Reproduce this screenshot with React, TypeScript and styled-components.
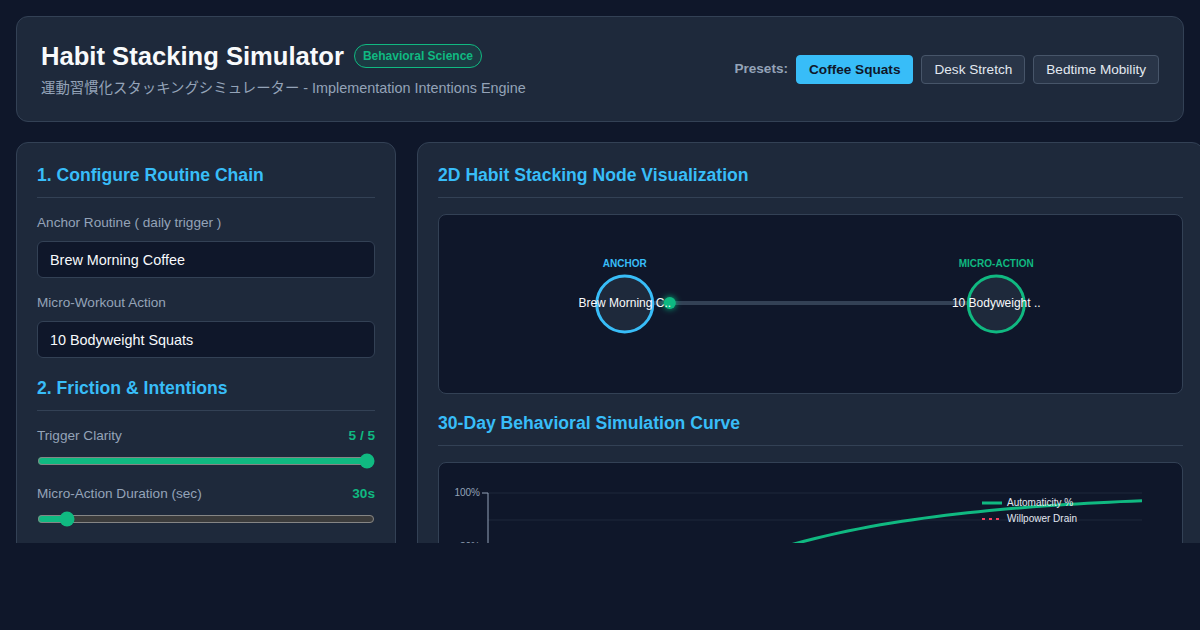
import { useState } from 'react';
import styled, { createGlobalStyle } from 'styled-components';

//
//Base page setup
const GlobalStyle = createGlobalStyle`
    *, *::before, *::after {
        box-sizing: border-box;
    }
    body {
        margin: 0;
        background: #0f172a;
        color: #f8fafc;
        font-family: "Liberation Sans", Arial, "Noto Sans CJK JP", sans-serif;
    }
`;

const Page = styled.div`
    padding: 16px;
`;

const Header = styled.header`
    display: flex;
    justify-content: space-between;
    align-items: center;
    padding: 24px;
    background: #1e293b;
    border: 1px solid #334155;
    border-radius: 12px;
`;

const TitleRow = styled.div`
    display: flex;
    align-items: center;
    gap: 10px;
`;

const Title = styled.h1`
    margin: 0;
    font-size: 25.6px;
    line-height: 30px;
    font-weight: 700;
    color: #f8fafc;
`;

const Badge = styled.span`
    font-size: 12px;
    line-height: 14px;
    font-weight: 700;
    color: #10b981;
    background: rgba(16, 185, 129, 0.12);
    border: 1px solid #10b981;
    border-radius: 999px;
    padding: 4px 8px;
`;

const Subtitle = styled.p`
    margin: 9px 0 0;
    font-size: 14.4px;
    line-height: 17px;
    color: #94a3b8;
`;

const Presets = styled.div`
    display: flex;
    align-items: center;
    gap: 8px;
`;

const PresetLabel = styled.span`
    font-size: 13.6px;
    font-weight: 700;
    color: #94a3b8;
    margin-bottom: 2px;
`;

const PresetButton = styled.button<{ $active?: boolean }>`
    font-family: inherit;
    font-size: 13.6px;
    line-height: 15px;
    padding: 6px 12px;
    border-radius: 4px;
    cursor: pointer;
    font-weight: ${(p) => (p.$active ? 700 : 400)};
    color: ${(p) => (p.$active ? '#0f172a' : '#e2e8f0')};
    background: ${(p) => (p.$active ? '#38bdf8' : '#293548')};
    border: 1px solid ${(p) => (p.$active ? '#38bdf8' : '#475569')};
`;

//
//Two column workspace, clipped at the bottom
const Main = styled.main`
    display: grid;
    grid-template-columns: 380px 787px;
    gap: 21px;
    align-items: start;
    margin-top: 20px;
    height: 401px;
    overflow-x: visible;
    overflow-y: clip;
`;

const Panel = styled.section`
    padding: 18px 20px 24px;
    background: #1e293b;
    border: 1px solid #334155;
    border-radius: 12px;
`;

const SectionTitle = styled.h2<{ $spaced?: boolean }>`
    margin: ${(p) => (p.$spaced ? '15px' : '0')} 0 16px;
    padding-bottom: 8px;
    border-bottom: 1px solid #334155;
    font-size: 17.6px;
    line-height: 28px;
    font-weight: 700;
    color: #38bdf8;
`;

const Field = styled.div`
    margin-bottom: 16px;
`;

const Label = styled.label`
    display: block;
    margin-bottom: 9px;
    font-size: 13.6px;
    line-height: 18px;
    color: #94a3b8;
`;

const TextInput = styled.input`
    display: block;
    width: 100%;
    height: 37px;
    padding: 0 12px;
    background: #0f172a;
    border: 1px solid #334155;
    border-radius: 6px;
    color: #f8fafc;
    font-family: inherit;
    font-size: 14.4px;
    outline: none;
`;

const SliderHead = styled.div`
    display: flex;
    justify-content: space-between;
    align-items: center;
    margin-bottom: 8px;
    font-size: 13.6px;
    line-height: 18px;
    color: #94a3b8;
`;

const SliderValue = styled.span`
    color: #10b981;
    font-weight: 700;
`;

const Range = styled.input`
    display: block;
    width: 100%;
    height: 16px;
    margin: 0;
    accent-color: #10b981;
    color-scheme: dark;
`;

const CanvasBox = styled.div<{ $h: number }>`
    height: ${(p) => p.$h}px;
    background: #0f172a;
    border: 1px solid #334155;
    border-radius: 8px;
    overflow: hidden;
`;

const Drawing = styled.svg`
    display: block;
    width: 100%;
    height: 100%;
`;

type Preset = { name: string; anchor: string; action: string; clarity: number; duration: number };

const PRESETS: Preset[] = [
    { name: 'Coffee Squats', anchor: 'Brew Morning Coffee', action: '10 Bodyweight Squats', clarity: 5, duration: 30 },
    { name: 'Desk Stretch', anchor: 'Sit Down at Desk', action: 'Neck & Shoulder Stretch', clarity: 4, duration: 60 },
    { name: 'Bedtime Mobility', anchor: 'Brush Teeth at Night', action: 'Hip Opener Flow', clarity: 3, duration: 120 },
];

const shorten = (s: string) => (s.length > 14 ? s.slice(0, 14) + '..' : s);

//
//Anchor -> micro-action link
const NodeGraph = ({ anchor, action }: { anchor: string; action: string }) => {
    const W = 743;
    const H = 178;
    const ax = W * 0.25;
    const bx = W * 0.75;
    const cy = H / 2;
    const r = 28;
    return (
        <Drawing viewBox={`0 0 ${W} ${H}`}>
            <defs>
                <filter id="pulse-glow" x="-100%" y="-100%" width="300%" height="300%">
                    <feGaussianBlur stdDeviation="3" result="b" />
                    <feMerge>
                        <feMergeNode in="b" />
                        <feMergeNode in="SourceGraphic" />
                    </feMerge>
                </filter>
            </defs>
            <line x1={ax + r} y1={cy - 1} x2={bx - r} y2={cy - 1} stroke="#334155" strokeWidth={4} />
            <text x={ax} y={cy - 40} textAnchor="middle" dominantBaseline="middle" fontSize={10} fontWeight={700} fill="#38bdf8">
                ANCHOR
            </text>
            <circle cx={ax} cy={cy} r={r} fill="#1e293b" stroke="#38bdf8" strokeWidth={3} />
            <text x={bx} y={cy - 40} textAnchor="middle" dominantBaseline="middle" fontSize={10} fontWeight={700} fill="#10b981">
                MICRO-ACTION
            </text>
            <circle cx={bx} cy={cy} r={r} fill="#1e293b" stroke="#10b981" strokeWidth={3} />
            <circle cx={ax + 45} cy={cy - 1} r={6} fill="#10b981" filter="url(#pulse-glow)" />
            <text x={ax} y={cy} textAnchor="middle" dominantBaseline="middle" fontSize={12} fill="#f8fafc">
                {shorten(anchor)}
            </text>
            <text x={bx} y={cy} textAnchor="middle" dominantBaseline="middle" fontSize={12} fill="#f8fafc">
                {shorten(action)}
            </text>
        </Drawing>
    );
};

//
//30 day automaticity vs willpower curve
const SimulationChart = ({ clarity, duration }: { clarity: number; duration: number }) => {
    const W = 743;
    const H = 328;
    const left = 49;
    const right = 703;
    const top = 30;
    const unit = 2.7;
    const k = 0.025 * clarity * (1 - duration / 600);
    const px = (t: number) => left + (t / 30) * (right - left);
    const py = (v: number) => top + (100 - v) * unit;

    const days = Array.from({ length: 61 }, (_, i) => i / 2);
    const auto = days.map((t) => `${px(t)},${py(100 * (1 - Math.exp(-k * t)))}`).join(' ');
    const drain = days
        .map((t) => `${px(t)},${py((20 + duration / 6) * Math.exp(-k * 0.9 * t) + 4)}`)
        .join(' ');

    return (
        <Drawing viewBox={`0 0 ${W} ${H}`}>
            {Array.from({ length: 11 }, (_, i) => i * 10).map((v) => (
                <line key={v} x1={left} x2={right} y1={py(v)} y2={py(v)} stroke="#1e293b" strokeWidth={1} />
            ))}
            {[0, 20, 40, 60, 80, 100].map((v) => (
                <g key={v}>
                    <line x1={left - 6} x2={left} y1={py(v)} y2={py(v)} stroke="#94a3b8" />
                    <text x={left - 8} y={py(v)} textAnchor="end" dominantBaseline="middle" fontSize={10} fill="#94a3b8">
                        {v}%
                    </text>
                </g>
            ))}
            <line x1={left} x2={left} y1={top} y2={py(0)} stroke="#94a3b8" />
            <line x1={left} x2={right} y1={py(0)} y2={py(0)} stroke="#94a3b8" />
            {[1, 5, 10, 15, 20, 25, 30].map((d) => (
                <text key={d} x={px(d)} y={py(0) + 16} textAnchor="middle" fontSize={10} fill="#94a3b8">
                    Day {d}
                </text>
            ))}
            <polyline points={drain} fill="none" stroke="#f43f5e" strokeWidth={2} strokeDasharray="3 4" />
            <polyline points={auto} fill="none" stroke="#10b981" strokeWidth={3} />
            <line x1={543} x2={563} y1={40} y2={40} stroke="#10b981" strokeWidth={3} />
            <text x={568} y={40} dominantBaseline="middle" fontSize={10} fill="#e2e8f0">
                Automaticity %
            </text>
            <line x1={543} x2={563} y1={56} y2={56} stroke="#f43f5e" strokeWidth={2} strokeDasharray="3 4" />
            <text x={568} y={56} dominantBaseline="middle" fontSize={10} fill="#e2e8f0">
                Willpower Drain
            </text>
        </Drawing>
    );
};

const App = () => {
    const [preset, setPreset] = useState('Coffee Squats');
    const [anchor, setAnchor] = useState('Brew Morning Coffee');
    const [action, setAction] = useState('10 Bodyweight Squats');
    const [clarity, setClarity] = useState(5);
    const [duration, setDuration] = useState(30);

    const applyPreset = (p: Preset) => {
        setPreset(p.name);
        setAnchor(p.anchor);
        setAction(p.action);
        setClarity(p.clarity);
        setDuration(p.duration);
    };

    return (
        <Page>
            <GlobalStyle />
            <Header>
                <div>
                    <TitleRow>
                        <Title>Habit Stacking Simulator</Title>
                        <Badge>Behavioral Science</Badge>
                    </TitleRow>
                    <Subtitle>運動習慣化スタッキングシミュレーター - Implementation Intentions Engine</Subtitle>
                </div>
                <Presets>
                    <PresetLabel>Presets:</PresetLabel>
                    {PRESETS.map((p) => (
                        <PresetButton key={p.name} $active={preset === p.name} onClick={() => applyPreset(p)}>
                            {p.name}
                        </PresetButton>
                    ))}
                </Presets>
            </Header>

            <Main>
                <Panel>
                    <SectionTitle>1. Configure Routine Chain</SectionTitle>
                    <Field>
                        <Label>Anchor Routine ( daily trigger )</Label>
                        <TextInput value={anchor} onChange={(e) => setAnchor(e.target.value)} />
                    </Field>
                    <Field>
                        <Label>Micro-Workout Action</Label>
                        <TextInput value={action} onChange={(e) => setAction(e.target.value)} />
                    </Field>

                    <SectionTitle $spaced>2. Friction &amp; Intentions</SectionTitle>
                    <Field>
                        <SliderHead>
                            <span>Trigger Clarity</span>
                            <SliderValue>{clarity} / 5</SliderValue>
                        </SliderHead>
                        <Range type="range" min={1} max={5} step={1} value={clarity} onChange={(e) => setClarity(Number(e.target.value))} />
                    </Field>
                    <Field>
                        <SliderHead>
                            <span>Micro-Action Duration (sec)</span>
                            <SliderValue>{duration}s</SliderValue>
                        </SliderHead>
                        <Range type="range" min={10} max={300} step={5} value={duration} onChange={(e) => setDuration(Number(e.target.value))} />
                    </Field>
                </Panel>

                <Panel>
                    <SectionTitle>2D Habit Stacking Node Visualization</SectionTitle>
                    <CanvasBox $h={180}>
                        <NodeGraph anchor={anchor} action={action} />
                    </CanvasBox>
                    <SectionTitle $spaced>30-Day Behavioral Simulation Curve</SectionTitle>
                    <CanvasBox $h={330}>
                        <SimulationChart clarity={clarity} duration={duration} />
                    </CanvasBox>
                </Panel>
            </Main>
        </Page>
    );
};

export default App;
